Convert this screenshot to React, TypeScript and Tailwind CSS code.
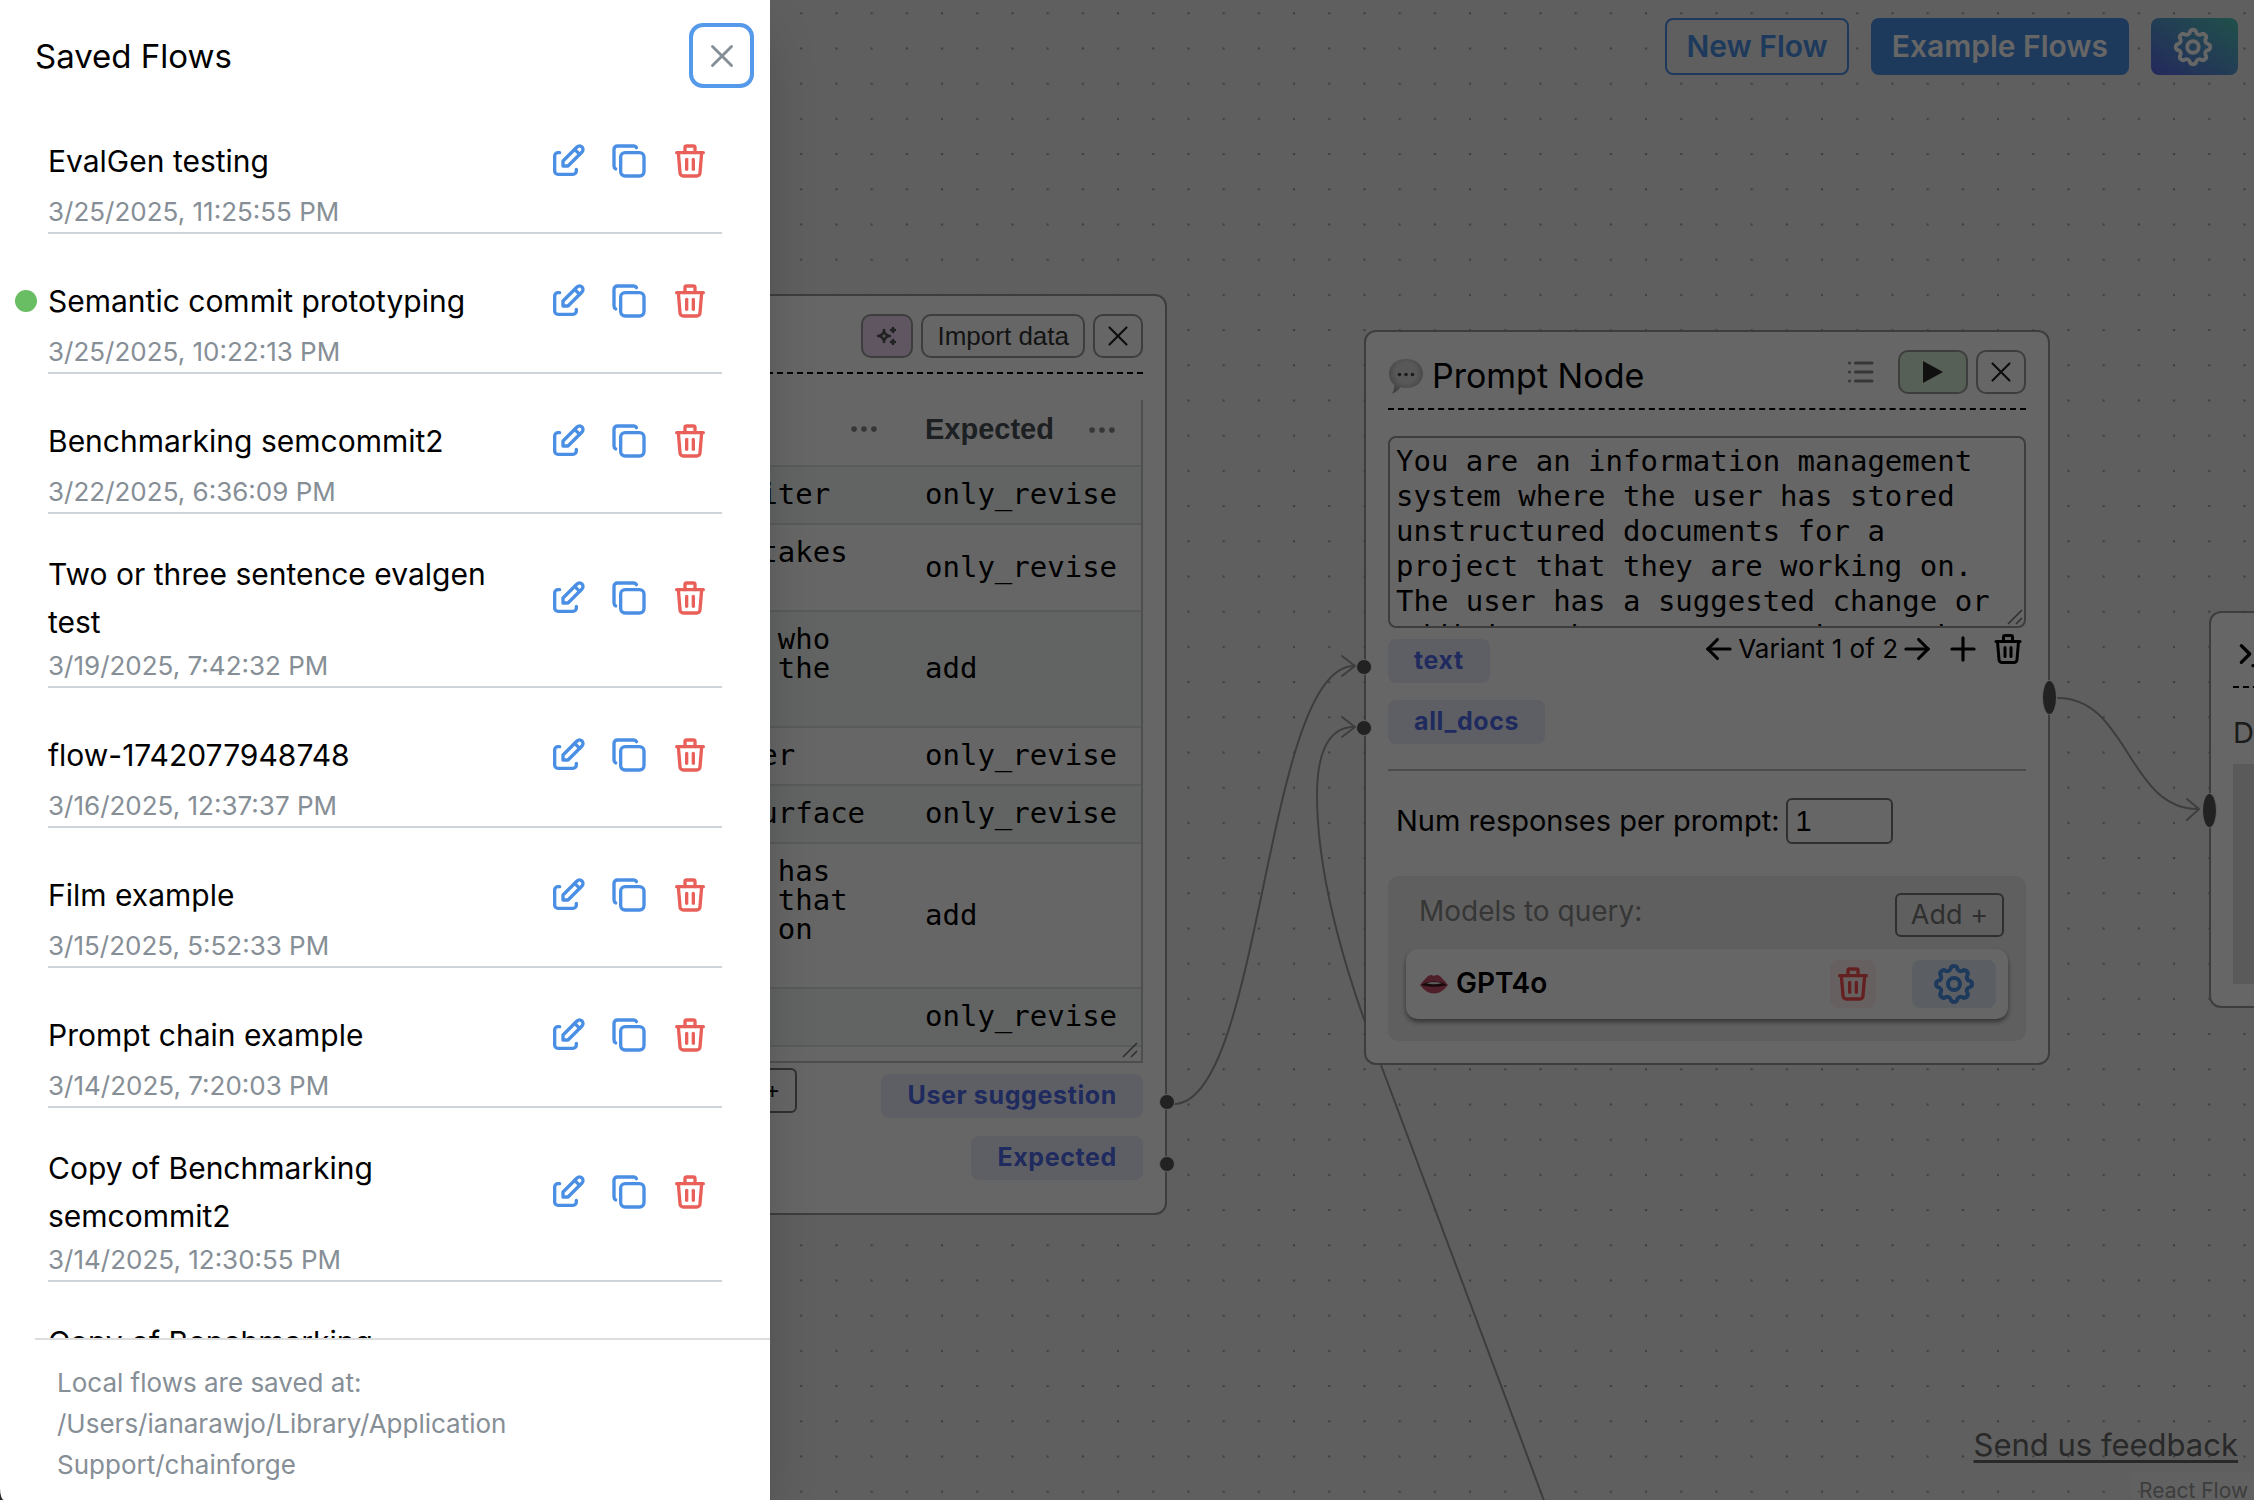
import type { ReactNode } from 'react';
import {
  TbArrowLeft,
  TbArrowRight,
  TbCopy,
  TbDots,
  TbEdit,
  TbList,
  TbPlus,
  TbSettings,
  TbSparkles,
  TbTerminal,
  TbTrash,
  TbX,
} from 'react-icons/tb';

interface Flow {
  name: string;
  date: string;
  active?: boolean;
}

const flows: Flow[] = [
  { name: 'EvalGen testing', date: '3/25/2025, 11:25:55 PM' },
  { name: 'Semantic commit prototyping', date: '3/25/2025, 10:22:13 PM', active: true },
  { name: 'Benchmarking semcommit2', date: '3/22/2025, 6:36:09 PM' },
  { name: 'Two or three sentence evalgen test', date: '3/19/2025, 7:42:32 PM' },
  { name: 'flow-1742077948748', date: '3/16/2025, 12:37:37 PM' },
  { name: 'Film example', date: '3/15/2025, 5:52:33 PM' },
  { name: 'Prompt chain example', date: '3/14/2025, 7:20:03 PM' },
  { name: 'Copy of Benchmarking semcommit2', date: '3/14/2025, 12:30:55 PM' },
  { name: 'Copy of Benchmarking semcommit2', date: '3/14/2025, 12:28:10 PM' },
];

const rows = [
  ['or writer', 'only_revise'],
  ['a mistakes\nin it', 'only_revise'],
  ['users who\nabout the\napp', 'add'],
  ['another', 'only_revise'],
  ['the surface', 'only_revise'],
  ['model has\ntools that\nturns on\nit', 'add'],
  ['all', 'only_revise'],
];

const promptText =
  'You are an information management\nsystem where the user has stored\nunstructured documents for a\nproject that they are working on.\nThe user has a suggested change or\naddition they want to make to the';

const FlowRow = ({ name, date, active }: Flow) => (
  <li className="pt-9 border-b-2 border-[#ced4da]">
    <div className="relative flex items-center gap-5 min-h-[62px]">
      {active && <span className="absolute -left-[33px] size-[22px] rounded-full bg-[#69bd63]" />}
      <span className="flex-1 text-[30px] leading-[48px] text-black">{name}</span>
      <div className="flex items-center gap-[21px] pr-3 text-[#4a8fe4]">
        <button aria-label={`Rename ${name}`}><TbEdit size={40} /></button>
        <button aria-label={`Duplicate ${name}`}><TbCopy size={40} /></button>
        <button aria-label={`Delete ${name}`} className="text-[#e9605a]"><TbTrash size={40} /></button>
      </div>
    </div>
    <p className="text-[26px] leading-10 text-[#868e96]">{date}</p>
  </li>
);

const SavedFlows = () => (
  <aside className="absolute inset-y-0 left-0 w-[770px] max-w-full bg-[#24242a] shadow-2xl">
    <div className="flex flex-col h-full bg-white rounded-bl-[4px_12px]">
      <header className="flex items-center justify-between pl-[35px] pr-4 pt-[23px] pb-[6px]">
        <h2 className="text-[33px] leading-[48px] text-black">Saved Flows</h2>
        <button
          aria-label="Close"
          className="flex items-center justify-center size-[65px] rounded-[14px] border-4 border-[#5499ea] text-[#868e96]"
        >
          <TbX size={38} strokeWidth={1.8} />
        </button>
      </header>
      <ul className="flex-1 min-h-0 overflow-hidden px-12">
        {flows.map((flow) => (
          <FlowRow key={flow.date} {...flow} />
        ))}
      </ul>
      <footer className="ml-[35px] pl-[22px] pt-[22px] pb-[15px] border-t-2 border-[#dddddd]">
        <p className="max-w-[520px] text-[26px] leading-[41px] text-[#868e96]">
          Local flows are saved at: /Users/ianarawjo/Library/Application Support/chainforge
        </p>
      </footer>
    </div>
  </aside>
);

// Dotted background and the wires between nodes
const Wires = () => (
  <svg className="absolute inset-0 size-full" fill="none">
    <defs>
      <pattern id="dots" x="25.8" y="12.2" width="35.2" height="35.2" patternUnits="userSpaceOnUse">
        <circle cx="1.1" cy="1.1" r="1.1" fill="#91919a" />
      </pattern>
    </defs>
    <rect width="100%" height="100%" fill="url(#dots)" />
    <g stroke="#999" strokeWidth="2" strokeLinecap="round" strokeLinejoin="round">
      <path d="M1174 1104C1262 1104 1265 666 1354 666" />
      <path d="M1342 656l13 10-13 10" />
      <path d="M1354 727C1325 727 1317 760 1317 795C1317 870 1340 960 1381 1065C1430 1195 1490 1356 1546 1506" />
      <path d="M1342 717l13 10-13 10" />
      <path d="M2058 698C2128 698 2128 809 2198 809" />
      <path d="M2187 799l12 10-12 11" />
    </g>
  </svg>
);

const ResizeGrip = () => (
  <svg className="absolute right-[3px] bottom-[3px] size-4" viewBox="0 0 16 16" stroke="#777" strokeWidth="1.6">
    <path d="M1 15L15 1M9 15l6-6" />
  </svg>
);

const Tag = ({ children, side }: { children: ReactNode; side: 'left' | 'right' }) => (
  <div className="relative h-11 px-[26px] rounded-lg bg-[#eceefb] text-[#4f69ea] text-[25px] leading-[43px] font-bold tracking-wide">
    {children}
    <span
      className={`absolute top-5 size-4 rounded-full bg-[#555] border border-[#eee] ${side === 'left' ? '-left-8' : '-right-8'}`}
    />
  </div>
);

const NodeHeader = ({ children }: { children?: ReactNode }) => (
  <div className="flex items-center gap-2 h-[78px] pt-1 border-b-2 border-dashed border-black">{children}</div>
);

const CloseButton = () => (
  <button
    aria-label="Remove node"
    className="flex items-center justify-center w-[50px] h-11 rounded-[10px] border-2 border-[#999] text-[#222]"
  >
    <TbX size={34} strokeWidth={1.5} />
  </button>
);

const TableNode = () => (
  <section className="absolute left-[633px] top-[294px] w-[534px] px-[22px] pb-[33px] bg-white border-2 border-[#999] rounded-xl">
    <NodeHeader>
      <div className="flex-1" />
      <button
        aria-label="Generate data"
        className="flex items-center justify-center w-[52px] h-11 rounded-[10px] border-2 border-[#999] bg-[#eed7f5] text-[#555]"
      >
        <TbSparkles size={24} strokeWidth={2.5} />
      </button>
      <button className="h-11 px-[14px] rounded-[10px] border-2 border-[#999] font-['Liberation_Sans',sans-serif] text-[26px] leading-[38px] text-[#333]">
        Import data
      </button>
      <CloseButton />
    </NodeHeader>
    <div className="relative mt-[26px] pb-[14px] border-r-2 border-b-2 border-[#c4c4c4]">
      <table className="w-full table-fixed text-left">
        <thead className="font-['Liberation_Sans',sans-serif] text-[29px] text-[#495057]">
          <tr className="border-b-2 border-[#dee2e6]">
            <th className="w-[252px] h-[66px] pl-4 pr-7 pb-2">
              <TbDots aria-label="Column menu" size={34} className="ml-auto text-[#888]" />
            </th>
            <th className="pl-4 pr-[22px] pb-[6px] font-bold">
              <div className="flex items-center justify-between">
                Expected
                <TbDots aria-label="Column menu" size={34} className="text-[#888]" />
              </div>
            </th>
          </tr>
        </thead>
        <tbody className="font-['DejaVu_Sans_Mono',monospace] text-[29px] leading-[29px] text-black whitespace-pre">
          {rows.map(([text, expected]) => (
            <tr key={text} className="border-b-2 border-[#dee2e6] odd:bg-[#f3f9f5]">
              <td className="pl-4 pt-[13px] pb-[14px]">{text}</td>
              <td className="pl-4 pt-[13px] pb-[14px]">{expected}</td>
            </tr>
          ))}
        </tbody>
      </table>
      <ResizeGrip />
    </div>
    <div className="flex items-start justify-between">
      <button className="mt-[5px] w-[140px] h-[45px] pr-4 text-right rounded-md border-2 border-[#767676] font-['DejaVu_Sans_Mono',monospace] text-[22px] text-black">
        Row +
      </button>
      <div className="flex flex-col items-end gap-[18px] pt-[11px]">
        <Tag side="right">User suggestion</Tag>
        <Tag side="right">Expected</Tag>
      </div>
    </div>
  </section>
);

const SpeechBubble = () => (
  <svg className="size-9 shrink-0" viewBox="0 0 36 36">
    <defs>
      <radialGradient id="bubble" cx="0.5" cy="0.4" r="0.6">
        <stop offset="0.5" stopColor="#dcdcdc" />
        <stop offset="1" stopColor="#a4a4a4" />
      </radialGradient>
    </defs>
    <path d="M18 1c10 0 17 6 17 14.500S28 30 18 30c-2 0-4-.2-5.500-.7C10.500 32.500 7 35 4 35.500c1.500-2 2.500-5 2.200-8.500C3 24.500 1 20.500 1 15.500 1 7 8 1 18 1z" fill="url(#bubble)" />
    <g fill="#444">
      <circle cx="11.500" cy="16.500" r="1.800" />
      <circle cx="18" cy="16.500" r="1.800" />
      <circle cx="24.500" cy="16.500" r="1.800" />
    </g>
  </svg>
);

const Lips = () => (
  <svg className="w-7 h-5 shrink-0" viewBox="0 0 28 20">
    <path d="M0 11C4 6 8 1 11 1c1.500 0 2 .8 3 .8S15.500 1 17 1c3 0 7 5 11 10-4 5-8.500 8.500-14 8.500S4 16 0 11z" fill="#c9506a" />
    <path d="M1 11c4-2.500 8-3.500 13-3.500s9 1 13 3.500c-4 1.200-8 1.800-13 1.800S5 12.200 1 11z" fill="#3a1820" />
    <path d="M6 9.300c5-1.600 11-1.600 16 0-5 1.200-11 1.200-16 0z" fill="#e8e0e0" />
  </svg>
);

const PromptNode = () => (
  <section className="absolute left-[1364px] top-[330px] w-[686px] px-[22px] pb-[22px] bg-white border-2 border-[#999] rounded-xl">
    <NodeHeader>
      <div className="flex flex-1 items-center gap-2 pt-2">
        <SpeechBubble />
        <h3 className="text-[34px] leading-[44px] text-black">Prompt Node</h3>
      </div>
      <button aria-label="Preview prompts" className="mr-3 text-[#888]"><TbList size={36} /></button>
      <button
        aria-label="Run"
        className="flex items-center justify-center w-[70px] h-11 rounded-[10px] border-2 border-[#999] bg-[#d7f0da]"
      >
        <svg className="w-5 h-[22px]" viewBox="0 0 20 22" fill="#2a2a2a">
          <path d="M0 0l20 11L0 22z" />
        </svg>
      </button>
      <CloseButton />
    </NodeHeader>
    <div className="relative mt-[26px]">
      <textarea
        aria-label="Prompt"
        defaultValue={promptText}
        className="block w-full h-[192px] px-[6px] pt-[6px] resize-none overflow-hidden rounded-lg border-2 border-[#999] bg-white font-['DejaVu_Sans_Mono',monospace] text-[29px] leading-[35px] text-black"
      />
      <ResizeGrip />
    </div>
    <div className="flex items-start justify-between">
      <div className="flex flex-col items-start gap-[17px] pt-[11px]">
        <Tag side="left">text</Tag>
        <Tag side="left">all_docs</Tag>
      </div>
      <div className="flex items-center pt-[1px] text-black">
        <button aria-label="Previous variant"><TbArrowLeft size={38} /></button>
        <span className="text-[26px]">Variant 1 of 2</span>
        <button aria-label="Next variant"><TbArrowRight size={38} /></button>
        <button aria-label="Add variant" className="ml-2"><TbPlus size={38} /></button>
        <button aria-label="Delete variant" className="ml-2"><TbTrash size={36} /></button>
      </div>
    </div>
    <hr className="mt-[25px] border-t-2 border-[#bbb]" />
    <div className="flex items-center gap-[6px] mt-[27px] pl-2">
      <label htmlFor="num" className="text-[29px] text-black">Num responses per prompt:</label>
      <input
        id="num"
        defaultValue="1"
        className="w-[107px] h-[46px] px-2 rounded-md border-2 border-[#767676] font-['Liberation_Sans',sans-serif] text-[29px] text-black"
      />
    </div>
    <div className="mt-8 pt-[17px] pb-[22px] rounded-[10px] bg-[#eeeeee]">
      <div className="flex items-center justify-between pl-[31px] pr-[22px]">
        <span className="pb-2 text-[28px] leading-9 text-[#888]">Models to query:</span>
        <button className="h-11 px-[14px] rounded-md border-2 border-[#767676] text-[27px] leading-10 text-[#777]">
          Add +
        </button>
      </div>
      <div className="flex items-center mt-3 mx-[18px] h-[70px] pl-[14px] pr-3 rounded-xl bg-white shadow-[0_3px_5px_rgba(0,0,0,0.45)]">
        <Lips />
        <span className="flex-1 pl-2 pb-[2px] text-[28px] font-semibold text-black">GPT4o</span>
        <button aria-label="Remove model" className="px-[3px] py-1 mr-9 rounded-lg bg-[#fff0ef] text-[#fa5252]">
          <TbTrash size={40} />
        </button>
        <button aria-label="Model settings" className="px-[18px] rounded-lg bg-[#e4eefb] text-[#4a8fe4]">
          <TbSettings size={48} />
        </button>
      </div>
    </div>
    <span className="absolute -right-[9px] top-[348px] w-[15px] h-[35px] rounded-[50%] bg-[#555] border border-[#eee]" />
  </section>
);

const InspectNode = () => (
  <section className="absolute left-[2209px] top-[611px] w-[600px] px-[22px] pb-[22px] bg-white border-2 border-[#999] rounded-xl">
    <div className="flex items-center h-[75px] pt-2 border-b-2 border-dashed border-black text-black">
      <TbTerminal size={40} />
    </div>
    <p className="mt-6 mb-[10px] text-[29px] leading-[42px] text-[#444]">D</p>
    <div className="h-[220px] bg-[#e1e1e1]" />
    <span className="absolute -left-[9px] top-[180px] w-[15px] h-[35px] rounded-[50%] bg-[#555] border border-[#eee]" />
  </section>
);

const Toolbar = () => (
  <div className="absolute top-[18px] right-4 flex gap-[22px] text-[30px] font-semibold">
    <button className="h-[57px] px-[19px] rounded-lg border-2 border-[#4a8fe4] bg-[#eeeeee] text-[#4a8fe4]">New Flow</button>
    <button className="h-[57px] px-[21px] rounded-lg bg-[#4a8fe4] text-white">Example Flows</button>
    <button
      aria-label="Settings"
      className="flex items-center justify-center w-[87px] h-[57px] pr-1 rounded-lg bg-linear-to-tr from-[#5a64e6] to-[#52c8b8] text-white"
    >
      <TbSettings size={46} />
    </button>
  </div>
);

export default function App() {
  return (
    <main className="relative h-screen overflow-hidden bg-[#eeeeee] font-['Inter',sans-serif]">
      <Wires />
      <TableNode />
      <PromptNode />
      <InspectNode />
      <Toolbar />
      <a href="#feedback" className="absolute right-4 bottom-[35px] text-[31px] leading-10 text-[#666] underline decoration-[3px] underline-offset-4">
        Send us feedback
      </a>
      <div className="absolute left-[2131px] bottom-0 h-[27px] px-2 pt-1 bg-white/30 text-[21px] leading-7 text-[#999] whitespace-nowrap">
        React Flow
      </div>

      {/* Drawer and its backdrop */}
      <div className="absolute inset-0 bg-black/60" />
      <SavedFlows />
    </main>
  );
}
